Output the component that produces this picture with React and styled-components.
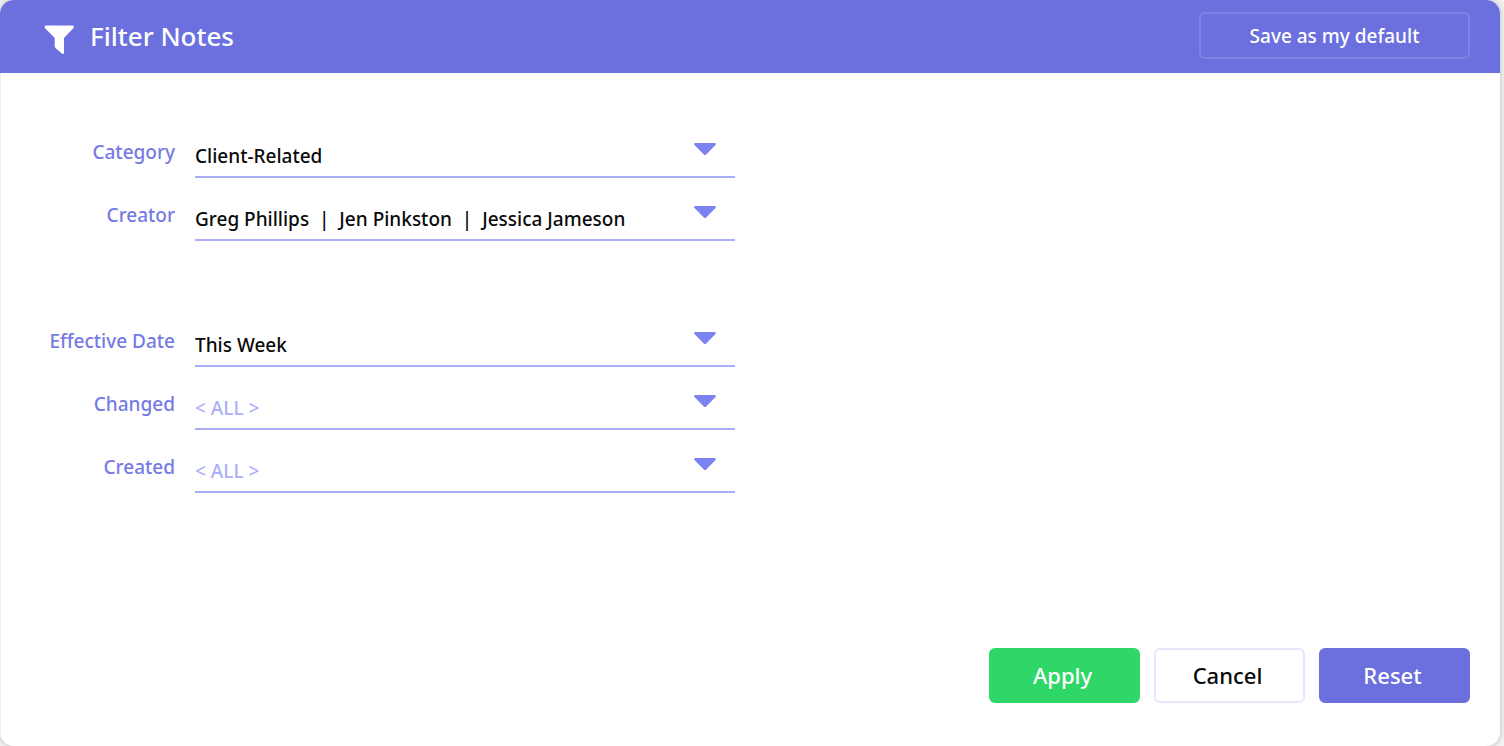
import styled, { createGlobalStyle } from "styled-components"

const GlobalStyle = createGlobalStyle`
  * {
    box-sizing: border-box;
  }
  body {
    margin: 0;
    background: #f3f3f4;
    font-family: "Noto Sans", sans-serif;
    font-weight: 500;
  }
  button, select {
    font-family: inherit;
  }
`
const Page = styled.div`
  min-height: 100vh;
  display: flex;
  padding-right: 4px;
`
const Panel = styled.form`
  flex: 1;
  display: flex;
  flex-direction: column;
  background: white;
  border-radius: 14px;
  box-shadow: 0 0 6px rgba(0, 0, 0, 0.25);
  overflow: hidden;
`
const Header = styled.header`
  display: flex;
  align-items: center;
  gap: 16px;
  height: 73px;
  padding: 0 30px 2px 44px;
  background: #6b70de;
`
const FilterIcon = styled.svg`
  width: 30px;
  height: 30px;
  margin-top: 8px;
  fill: white;
`
const Title = styled.h1`
  flex: 1;
  margin: 0;
  font-weight: 500;
  font-size: 26px;
  line-height: 36px;
  color: white;
`
const SaveButton = styled.button`
  width: 271px;
  height: 47px;
  border: 2px solid #7d82e4;
  border-radius: 6px;
  background: transparent;
  color: white;
  font-weight: 500;
  font-size: 19px;
`
const Content = styled.div`
  flex: 1;
  display: flex;
  flex-direction: column;
  justify-content: space-between;
  padding: 42px 0 43px;
  box-shadow: inset 1px 0 #ededf0;
`
const Fields = styled.div`
  display: flex;
  flex-direction: column;
  gap: 63px;
`
const Group = styled.div`
  display: flex;
  flex-direction: column;
`
const Row = styled.div`
  display: grid;
  grid-template-columns: 175px minmax(0, 540px);
  column-gap: 20px;
`
const Label = styled.label`
  padding-top: 23px;
  font-size: 19px;
  line-height: 28px;
  text-align: right;
  color: #757ae4;
`
const Field = styled.div`
  position: relative;
`
const Select = styled.select`
  display: block;
  width: 100%;
  height: 63px;
  padding: 20px 50px 0 0;
  border: none;
  border-bottom: 2px solid #abaef8;
  border-radius: 0;
  background: transparent;
  appearance: none;
  font-weight: 500;
  font-size: 19px;
  color: ${props => props.$empty ? "#acb0fa" : "#0a0a0a"};
`
const Arrow = styled.svg`
  position: absolute;
  right: 18px;
  top: 27px;
  width: 24px;
  height: 14px;
  fill: #7c82f0;
  pointer-events: none;
`
const Footer = styled.footer`
  display: flex;
  justify-content: flex-end;
  gap: 14px;
  padding-right: 30px;
`
const Button = styled.button`
  width: 151px;
  height: 55px;
  padding: 0 4px 2px 0;
  border: 2px solid ${props => props.$border || props.$bg};
  border-radius: 6px;
  background: ${props => props.$bg};
  color: ${props => props.$color || "white"};
  font-weight: 500;
  font-size: 22px;
`

const groups = [
  [
    { id: "category", label: "Category", value: "Client-Related" },
    { id: "creator", label: "Creator", value: "Greg Phillips\u00a0 |\u00a0 Jen Pinkston\u00a0 |\u00a0 Jessica Jameson" },
  ],
  [
    { id: "effective", label: "Effective Date", value: "This Week" },
    { id: "changed", label: "Changed", value: "< ALL >", empty: true },
    { id: "created", label: "Created", value: "< ALL >", empty: true },
  ],
]

function FilterField({ id, label, value, empty }){
  return(
    <Row>
      <Label htmlFor={id}>{label}</Label>
      <Field>
        <Select id={id} $empty={empty}>
          <option>{value}</option>
        </Select>
        <Arrow viewBox="0 0 24 14" aria-hidden="true">
          <path d="M2.4 1h19.2c1.2 0 1.7 1.2.9 2l-9.3 9.4c-.7.7-1.7.7-2.4 0L1.5 3c-.8-.8-.3-2 .9-2z" />
        </Arrow>
      </Field>
    </Row>
  )
}

function App(){
  return(
    <>
      <GlobalStyle />
      <Page>
        <Panel onSubmit={e => e.preventDefault()}>
          <Header>
            <FilterIcon viewBox="0 0 30 30" aria-hidden="true">
              <path d="M2.200.5h26c1.500 0 2.100 1.600 1.100 2.700L20 13v14.800c0 1.200-1.200 1.600-2.100.8l-6.200-5.300c-.7-.6-1-1.200-1-2V13L1.100 3.200C.1 2.100.7.5 2.200.5z" />
            </FilterIcon>
            <Title>Filter Notes</Title>
            <SaveButton type="button">Save as my default</SaveButton>
          </Header>
          <Content>
            <Fields>
              {groups.map((fields, i) => (
                <Group key={i}>
                  {fields.map(field => <FilterField key={field.id} {...field} />)}
                </Group>
              ))}
            </Fields>
            <Footer>
              <Button type="submit" $bg="#2ed768">Apply</Button>
              <Button type="button" $bg="white" $border="#e6e7fc" $color="#0a0a0a">Cancel</Button>
              <Button type="reset" $bg="#6b70de">Reset</Button>
            </Footer>
          </Content>
        </Panel>
      </Page>
    </>
  )
}

export default App
